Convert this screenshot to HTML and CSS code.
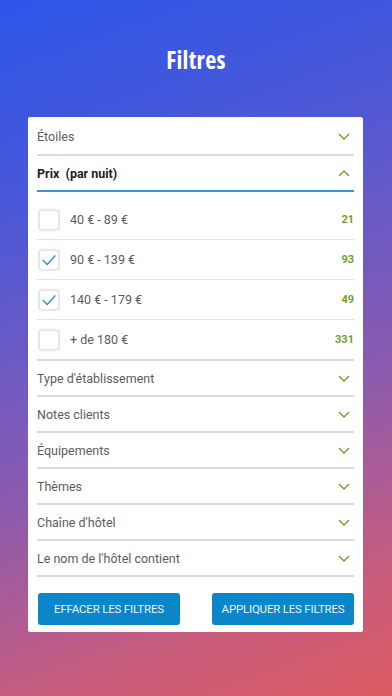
FILE: index.html
```html
<!DOCTYPE html>
<html lang="fr">
<head>
    <meta charset="UTF-8">
    <meta name="viewport" content="width=device-width, initial-scale=1.0">
    <title>Filtres</title>
    <link rel="stylesheet" href="styles.css">
</head>
<body>
    <h1 class="title">Filtres</h1>

    <div class="card">
        <div class="row">
            <span class="label">Étoiles</span>
            <svg class="chevron" viewBox="0 0 12 7"><path d="M1 1l5 5 5-5"/></svg>
        </div>
        <div class="row open">
            <span class="label bold">Prix&nbsp; (par nuit)</span>
            <svg class="chevron" viewBox="0 0 12 7"><path d="M1 6l5-5 5 5"/></svg>
        </div>

        <div class="options">
            <div class="option">
                <span class="box"></span>
                <span class="label">40 € - 89 €</span>
                <span class="count">21</span>
            </div>
            <div class="option">
                <span class="box"><svg viewBox="0 0 20 20"><path d="M3 10l5 5 9-10"/></svg></span>
                <span class="label">90 € - 139 €</span>
                <span class="count">93</span>
            </div>
            <div class="option">
                <span class="box"><svg viewBox="0 0 20 20"><path d="M3 10l5 5 9-10"/></svg></span>
                <span class="label">140 € - 179 €</span>
                <span class="count">49</span>
            </div>
            <div class="option">
                <span class="box"></span>
                <span class="label">+ de 180 €</span>
                <span class="count">331</span>
            </div>
        </div>

        <div class="row">
            <span class="label">Type d'établissement</span>
            <svg class="chevron" viewBox="0 0 12 7"><path d="M1 1l5 5 5-5"/></svg>
        </div>
        <div class="row">
            <span class="label">Notes clients</span>
            <svg class="chevron" viewBox="0 0 12 7"><path d="M1 1l5 5 5-5"/></svg>
        </div>
        <div class="row">
            <span class="label">Équipements</span>
            <svg class="chevron" viewBox="0 0 12 7"><path d="M1 1l5 5 5-5"/></svg>
        </div>
        <div class="row">
            <span class="label">Thèmes</span>
            <svg class="chevron" viewBox="0 0 12 7"><path d="M1 1l5 5 5-5"/></svg>
        </div>
        <div class="row">
            <span class="label">Chaîne d'hôtel</span>
            <svg class="chevron" viewBox="0 0 12 7"><path d="M1 1l5 5 5-5"/></svg>
        </div>
        <div class="row">
            <span class="label">Le nom de l'hôtel contient</span>
            <svg class="chevron" viewBox="0 0 12 7"><path d="M1 1l5 5 5-5"/></svg>
        </div>

        <div class="actions">
            <button class="btn">EFFACER LES FILTRES</button>
            <button class="btn">APPLIQUER LES FILTRES</button>
        </div>
    </div>
</body>
</html>
```

FILE: styles.css
```css
html, body {
    margin: 0;
    height: 696px;
}
body {
    width: 392px;
    background: linear-gradient(160deg, #2b55e8 0%, #4a58d8 25%, #8a5bb0 60%, #c85c7c 85%, #dc5c62 100%);
    font-family: Roboto, "Liberation Sans", sans-serif;
    overflow: hidden;
}
.title {
    margin: 0;
    padding-top: 44px;
    height: 117px;
    box-sizing: border-box;
    text-align: center;
    color: #fff;
    font-family: "Open Sans", sans-serif;
    font-stretch: 80%;
    font-size: 24px;
    line-height: 32px;
    font-weight: bold;
    letter-spacing: 0.3px;
}
.card {
    margin: 0 29px 0 28px;
    background: #fff;
    border-radius: 2px;
    padding: 1px 9px 7px 9px;
}
.row {
    display: flex;
    align-items: center;
    justify-content: space-between;
    height: 34px;
    border-bottom: 2px solid #dcdcdc;
}
.row:first-child {
    height: 36px;
}
.row.open {
    border-bottom-color: #3a95d4;
}
.label {
    font-size: 12.5px;
    font-stretch: 88%;
    color: #5c5c5c;
}
.label.bold {
    font-weight: bold;
    color: #222;
}
.chevron {
    width: 12px;
    height: 7px;
    margin-right: 4px;
    fill: none;
    stroke: #6f9f2c;
    stroke-width: 1.4;
}
.options {
    padding-top: 8px;
}
.option {
    display: flex;
    align-items: center;
    height: 39px;
    border-bottom: 1px solid #e2e2e2;
}
.option:last-child {
    border-bottom: 2px solid #dcdcdc;
}
.box {
    width: 18px;
    height: 18px;
    margin-left: 2px;
    margin-right: 11px;
    border: 1px solid #e4e4e4;
    border-radius: 3px;
    box-shadow: 0 0 2px 1px #e6e6e6;
    background: #fff;
}
.box svg {
    display: block;
    width: 18px;
    height: 18px;
    fill: none;
    stroke: #2e8ac8;
    stroke-width: 1.4;
}
.option .label {
    flex: 1;
}
.count {
    font-size: 11px;
    font-weight: bold;
    color: #6f9f2c;
}
.actions {
    display: flex;
    justify-content: space-between;
    padding-top: 16px;
}
.btn {
    width: 142px;
    height: 32px;
    margin-left: 1px;
    padding: 0;
    border: none;
    border-radius: 3px;
    background: #0a86c9;
    color: #e8f3fa;
    font-family: Roboto, "Liberation Sans", sans-serif;
    font-size: 11.5px;
    letter-spacing: -0.2px;
    white-space: nowrap;
}
```
